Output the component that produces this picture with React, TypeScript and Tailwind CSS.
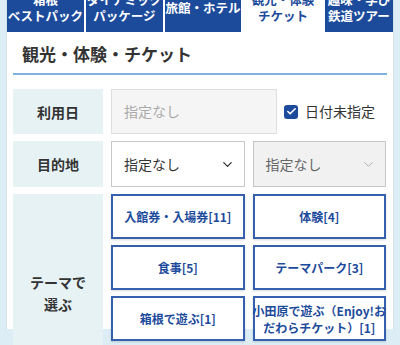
import { Check, ChevronDown } from 'lucide-react';

const tabs = [
  { label: ['箱根', 'ベストパック'], width: 'w-[77px]', active: false },
  { label: ['ダイナミック', 'パッケージ'], width: 'w-[77px]', active: false },
  { label: ['旅館・ホテル'], width: 'w-[76px]', active: false },
  { label: ['観光・体験', 'チケット'], width: 'w-[80px]', active: true },
  { label: ['趣味・学び', '鉄道ツアー'], width: 'flex-1', active: false },
];

const themes = [
  ['入館券・入場券[11]'],
  ['体験[4]'],
  ['食事[5]'],
  ['テーマパーク[3]'],
  ['箱根で遊ぶ[1]'],
  ['小田原で遊ぶ（Enjoy!お', 'だわらチケット）[1]'],
];

function Label({ children, tall }: { children: React.ReactNode; tall?: boolean }) {
  return (
    <div
      className={`bg-[#e7f2f5] flex items-center justify-center text-center text-[14px] font-bold leading-[22px] text-[#333] ${
        tall ? 'h-[198px]' : ''
      }`}
    >
      {children}
    </div>
  );
}

export default function App() {
  return (
    <div
      className="h-[345px] overflow-hidden bg-[#dcedf6] px-[6px]"
      style={{ fontFamily: '"Noto Sans CJK JP", "Noto Sans", sans-serif' }}
    >
      <div className="bg-white h-full border-x border-[#d3e2ea]">
        {/* tabs, scrolled slightly out of view at the top */}
        <div className="flex gap-[2px] -mt-[16px]">
          {tabs.map((t) => (
            <div
              key={t.label.join('')}
              className={`${t.width} h-[48px] flex flex-col items-center justify-center text-center whitespace-nowrap text-[12.5px] font-bold leading-[16px] ${
                t.active ? 'bg-white text-[#1d4b9c]' : 'bg-[#1d4b9c] text-white'
              }`}
            >
              {t.label.map((l) => (
                <span key={l} className="block">
                  {l}
                </span>
              ))}
            </div>
          ))}
        </div>

        <div className="px-[6px]">
          <h2 className="pt-[10px] pb-[7px] pl-[9px] text-[17px] leading-[24px] font-bold text-[#333] border-b-2 border-[#7fb0de]">
            観光・体験・チケット
          </h2>

          <div className="mt-[14px] grid grid-cols-[90px_1fr] gap-x-[8px] gap-y-[7px] pr-[1px]">
            <Label>利用日</Label>
            <div className="flex items-center h-[45px]">
              <div className="w-[166px] h-full bg-[#f5f5f5] border border-[#dedede] flex items-center pl-[12px] text-[14px] text-[#aaa]">
                指定なし
              </div>
              <div className="ml-[7px] w-[14px] h-[14px] rounded-[3px] bg-[#1d4b9c] flex items-center justify-center">
                <Check size={11} strokeWidth={3.5} className="text-white" />
              </div>
              <span className="ml-[7px] text-[14px] text-[#333]">日付未指定</span>
            </div>

            <Label>目的地</Label>
            <div className="grid grid-cols-2 gap-[8px] h-[46px]">
              <div className="border border-[#c8c8c8] bg-white flex items-center justify-between pl-[12px] pr-[9px] text-[14px] text-[#333]">
                指定なし
                <ChevronDown size={15} strokeWidth={2} className="text-[#333]" />
              </div>
              <div className="border border-[#c8c8c8] bg-[#f1f1f1] flex items-center justify-between pl-[12px] pr-[9px] text-[14px] text-[#666]">
                指定なし
                <ChevronDown size={15} strokeWidth={1.5} className="text-[#aaa]" />
              </div>
            </div>

            <Label tall>
              テーマで
              <br />
              選ぶ
            </Label>
            <div className="grid grid-cols-2 gap-x-[8px] gap-y-[6px] auto-rows-[45px] self-start">
              {themes.map((t) => (
                <div
                  key={t.join('')}
                  className="border-2 border-[#3560ad] bg-white shadow-[0_1px_2px_rgba(0,0,0,0.15)] flex flex-col items-center justify-center text-center whitespace-nowrap text-[12px] leading-[17px] font-bold text-[#1d4b9c]"
                >
                  {t.map((l) => (
                    <span key={l} className="block">
                      {l}
                    </span>
                  ))}
                </div>
              ))}
            </div>
          </div>
        </div>
      </div>
    </div>
  );
}
